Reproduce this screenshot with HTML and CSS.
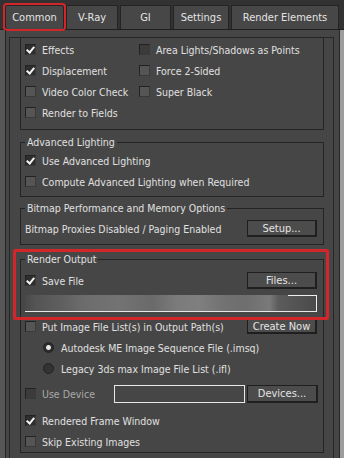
FILE: index.html
```html
<!DOCTYPE html>
<html lang="en">
<head>
  <meta charset="UTF-8">
  <title>Render Setup - Common</title>
  <link rel="stylesheet" href="styles.css">
</head>
<body>

  <div class="tabs">
    <div class="tab tab-common active">Common</div>
    <div class="tab tab-vray">V-Ray</div>
    <div class="tab tab-gi">GI</div>
    <div class="tab tab-settings">Settings</div>
    <div class="tab tab-elements">Render Elements</div>
  </div>

  <div class="frame">
    <div class="rollout-outer">
      <div class="rollout">

        <!-- Options (scrolled, title hidden) -->
        <div class="group group-top">
          <div class="row cols">
            <div class="check"><span class="box on"></span>Effects</div>
            <div class="check"><span class="box dark"></span>Area Lights/Shadows as Points</div>
          </div>
          <div class="row cols">
            <div class="check"><span class="box on"></span>Displacement</div>
            <div class="check"><span class="box"></span>Force 2-Sided</div>
          </div>
          <div class="row cols">
            <div class="check"><span class="box"></span>Video Color Check</div>
            <div class="check"><span class="box"></span>Super Black</div>
          </div>
          <div class="row">
            <div class="check"><span class="box"></span>Render to Fields</div>
          </div>
        </div>

        <!-- Advanced Lighting -->
        <div class="group group-light">
          <div class="group-title">Advanced Lighting</div>
          <div class="row">
            <div class="check"><span class="box on"></span>Use Advanced Lighting</div>
          </div>
          <div class="row">
            <div class="check"><span class="box"></span>Compute Advanced Lighting when Required</div>
          </div>
        </div>

        <!-- Bitmap Performance -->
        <div class="group group-bitmap">
          <div class="group-title">Bitmap Performance and Memory Options</div>
          <div class="row">
            <span>Bitmap Proxies Disabled / Paging Enabled</span>
            <div class="btn">Setup...</div>
          </div>
        </div>

        <!-- Render Output -->
        <div class="group group-output">
          <div class="highlight"></div>
          <div class="group-title">Render Output</div>
          <div class="row row-save">
            <div class="check"><span class="box on"></span>Save File</div>
            <div class="btn">Files...</div>
          </div>
          <div class="path"></div>
          <div class="row row-list">
            <div class="check"><span class="box"></span>Put Image File List(s) in Output Path(s)</div>
            <div class="btn btn-short">Create Now</div>
          </div>
          <div class="row radio-row">
            <span class="radio on"></span>Autodesk ME Image Sequence File (.imsq)
          </div>
          <div class="row radio-row">
            <span class="radio"></span>Legacy 3ds max Image File List (.ifl)
          </div>
          <div class="row row-device">
            <div class="check muted"><span class="box dark"></span>Use Device</div>
            <div class="device-field"></div>
            <div class="btn btn-device">Devices...</div>
          </div>
          <div class="row row-frame">
            <div class="check"><span class="box on"></span>Rendered Frame Window</div>
          </div>
          <div class="row">
            <div class="check"><span class="box"></span>Skip Existing Images</div>
          </div>
        </div>

      </div>
    </div>
  </div>

</body>
</html>
```

FILE: styles.css
```css
body {
  margin: 0;
  width: 344px;
  height: 458px;
  overflow: hidden;
  background: #464646;
  font-family: "DejaVu Sans Condensed", "DejaVu Sans", sans-serif;
  font-size: 10.5px;
  color: #e0e0e0;
}

/* tab strip */
.tabs {
  height: 30px;
  box-sizing: border-box;
  display: flex;
  gap: 2px;
  padding: 5px 0 0 5px;
  background: #323232;
  border-bottom: 1px solid #1e1e1e;
}

.tab {
  height: 24px;
  box-sizing: border-box;
  display: flex;
  align-items: center;
  justify-content: center;
  padding-bottom: 1px;
  background: #474747;
  border: 1px solid #242424;
  border-bottom: none;
  color: #e4e4e4;
  font-size: 11px;
}

.tab-common { width: 59px; }
.tab-vray { width: 52px; }
.tab-gi { width: 51px; }
.tab-settings { width: 56px; }
.tab-elements { width: 108px; }

.tab.active {
  outline: 2px solid #d3262b;
  outline-offset: 0;
  border-radius: 2px;
}

/* panel frame */
.frame {
  display: flex;
  height: 428px;
  border-left: 5px solid #575757;
  border-right: 4px solid #9d9d9d;
  overflow: hidden;
}

.rollout-outer {
  flex: 1;
  border-left: 1px solid #262626;
  border-right: 1px solid #262626;
  padding: 7px 5px 0 3px;
}

.rollout {
  height: 100%;
  box-sizing: border-box;
  border: 1px solid #262626;
  border-bottom: none;
  padding: 0 9px 0 10px;
}

/* group boxes */
.group {
  position: relative;
  display: flex;
  flex-direction: column;
  border: 1px solid #242424;
  margin-top: 12px;
}

.group-top {
  border-top: none;
  margin-top: 0;
  padding: 1px 0 6px;
}

.group-title {
  align-self: flex-start;
  margin: -8px 0 0 4px;
  padding: 0 2px;
  line-height: 14px;
  background: #464646;
}

.group-light { padding-bottom: 4px; }
.group-light .group-title { margin-bottom: 1px; }

.group-bitmap { margin-top: 11px; padding-bottom: 5px; }
.group-bitmap .group-title { margin-bottom: 3px; }

.group-output { margin-top: 14px; }
.group-output .group-title { margin-bottom: 4px; }

.row {
  height: 21px;
  display: flex;
  align-items: center;
  padding: 0 6px 0 4px;
  white-space: nowrap;
}

.cols {
  display: grid;
  grid-template-columns: 114px 1fr;
}

.check {
  display: flex;
  align-items: center;
}

.check.muted { color: #a9a9a9; }

.box {
  position: relative;
  flex: none;
  width: 11px;
  height: 11px;
  box-sizing: border-box;
  margin-right: 6px;
  border: 1px solid #222;
  border-right-color: #3a3a3a;
  border-bottom-color: #3a3a3a;
  background: #555;
}

.box.dark { background: #3b3b3b; }

.box.on { background: #2e2e2e; }

.box.on::after {
  content: "";
  position: absolute;
  left: 2px;
  top: 0;
  width: 3px;
  height: 6px;
  border: solid #f4f4f4;
  border-width: 0 2px 2px 0;
  transform: rotate(40deg);
}

.btn {
  margin-left: auto;
  flex: none;
  width: 70px;
  height: 17px;
  box-sizing: border-box;
  display: flex;
  align-items: center;
  justify-content: center;
  background: #4c4c4c;
  border: 1px solid #1f1f1f;
  border-right-width: 2px;
  border-bottom-width: 2px;
  color: #e4e4e4;
  font-size: 11px;
}

.btn-short { height: 15px; }
.btn-device { width: 71px; height: 18px; margin-right: -1px; }

/* blurred output path */
.path {
  position: relative;
  height: 17px;
  box-sizing: border-box;
  margin: 4px 6px 0 4px;
  border-right: 1px solid #eee;
  border-bottom: 1px solid #e6e6e6;
  background: linear-gradient(to right, #4a4a4a 0, #555 4%, #5e5e5e 12%, #6c6c6c 20%, #737373 32%, #6a6a6a 44%, #7b7b7b 52%, #7f7f7f 60%, #727272 68%, #6e6e6e 76%, #7a7a7a 84%, #5c5c5c 87%, #4a4a4a 100%);
}

.path::after {
  content: "";
  position: absolute;
  top: 0;
  right: 0;
  width: 28px;
  border-top: 1px solid #eee;
}

.row-list { margin-top: 4px; }

.radio-row { padding-left: 22px; }

.radio {
  flex: none;
  width: 11px;
  height: 11px;
  box-sizing: border-box;
  margin-right: 7px;
  border-radius: 50%;
  border: 1px solid #222;
  background: #333;
}

.radio.on {
  background: radial-gradient(circle, #f0f0f0 0, #e0e0e0 2px, #2c2c2c 3px);
}

.row-device { margin-top: 4px; }

.device-field {
  width: 131px;
  height: 18px;
  box-sizing: border-box;
  margin-left: 19px;
  border: 1px solid #e8e8e8;
}

.row-frame { margin-top: 6px; }

/* red callouts */
.highlight {
  position: absolute;
  left: -8px;
  top: -11px;
  width: 316px;
  height: 71px;
  box-sizing: border-box;
  border: 3px solid #d3262b;
  border-radius: 2px;
}
```
